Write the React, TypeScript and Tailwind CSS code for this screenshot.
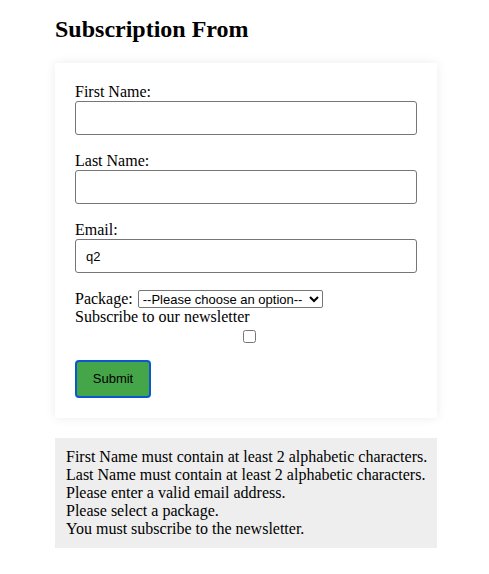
const fields = [
  { label: 'First Name:', value: '' },
  { label: 'Last Name:', value: '' },
  { label: 'Email:', value: 'q2' },
]

const errors = [
  'First Name must contain at least 2 alphabetic characters.',
  'Last Name must contain at least 2 alphabetic characters.',
  'Please enter a valid email address.',
  'Please select a package.',
  'You must subscribe to the newsletter.',
]

const App = () => {
  return (
    <div className="min-h-screen bg-white font-['Liberation_Serif',serif] text-[16px] text-black pt-4">
      <div className="ml-[55px] w-[382px]">
        <h2 className="text-[24px] font-bold leading-[27px] mb-5">Subscription From</h2>
        <form className="bg-white p-5 shadow-[0_0_10px_rgba(0,0,0,0.08)]" onSubmit={(e) => e.preventDefault()}>
          {fields.map((f) => (
            <div key={f.label} className="mb-[17px]">
              <label className="block leading-[18px]">{f.label}</label>
              <input
                type="text"
                defaultValue={f.value}
                className="block w-full h-[34px] border border-[#767676] rounded-[3px] px-[10px] font-['Liberation_Sans',sans-serif] text-[13px]"
              />
            </div>
          ))}
          <div className="leading-[18px] flex items-center">
            <label>Package:</label>
            <select className="ml-[5px] h-[18px] w-[185px] border border-[#767676] rounded-[2px] font-['Liberation_Sans',sans-serif] text-[13px] leading-[16px]">
              <option>--Please choose an option--</option>
              <option>Basic</option>
              <option>Premium</option>
            </select>
          </div>
          <label className="block leading-[18px]">Subscribe to our newsletter</label>
          <div className="h-[19px] pt-[4px] pl-[168px]">
            <input type="checkbox" className="block w-[13px] h-[13px]" />
          </div>
          <button
            type="submit"
            className="mt-[15px] w-[76px] h-[38px] bg-[#45a549] border-2 border-[#0b57d0] rounded-[4px] font-['Liberation_Sans',sans-serif] text-[13px] text-black"
          >
            Submit
          </button>
        </form>
        <div className="mt-5 bg-[#eeeeee] py-[10px] px-[11px] leading-[18px] whitespace-nowrap">
          {errors.map((e) => (
            <div key={e}>{e}</div>
          ))}
        </div>
      </div>
    </div>
  )
}

export default App
